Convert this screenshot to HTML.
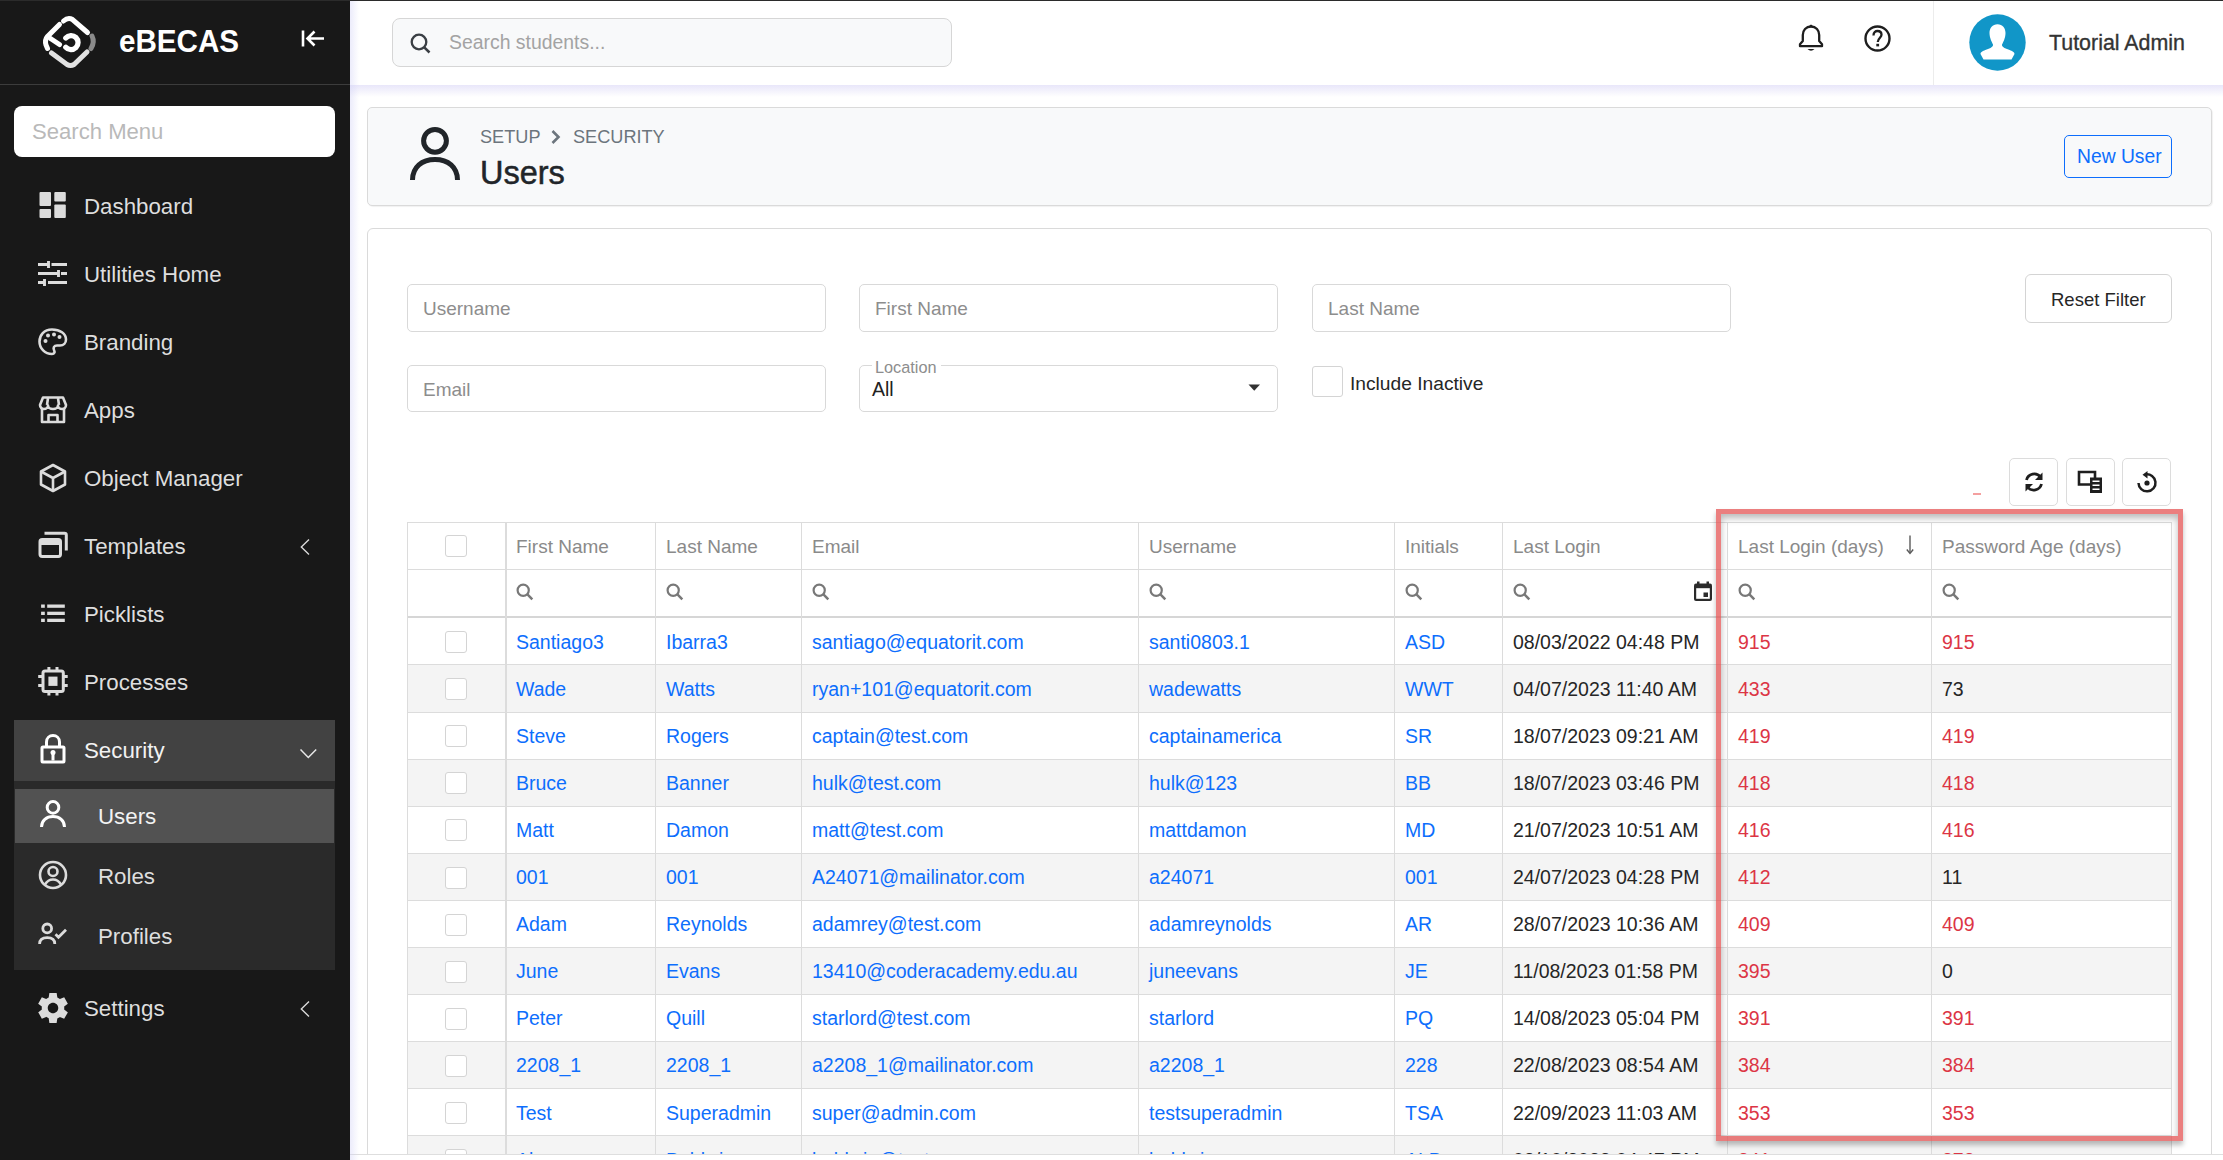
<!DOCTYPE html>
<html><head><meta charset="utf-8">
<style>
*{box-sizing:border-box;margin:0;padding:0}
html,body{width:2223px;height:1160px;overflow:hidden;background:#fff;font-family:"Liberation Sans",sans-serif}
.a{position:absolute}
.t{position:absolute;white-space:nowrap;line-height:1}
#sb{position:absolute;left:0;top:0;width:350px;height:1160px;background:#181818;z-index:5}
.mi{position:absolute;left:84px;margin-top:1px;font-size:22.3px;color:#dedede;line-height:1;white-space:nowrap}
.ic{position:absolute;left:38px;width:30px;height:30px}
.chev{position:absolute}
.inp{position:absolute;background:#fff;border:1px solid #d9d9d9;border-radius:5px}
.ph{position:absolute;white-space:nowrap;line-height:1;font-size:19px;color:#8d8d8d}
.vl{position:absolute;width:1px;background:#dcdcdc}
.hl{position:absolute;height:1px;background:#dcdcdc}
.cell{position:absolute;white-space:nowrap;line-height:1;font-size:19.5px}
.lnk{color:#0d6efd}
.red{color:#dc3545}
.blk{color:#262626}
.hd{color:#8a8a8a;font-size:19px}
.cb{position:absolute;width:22px;height:22px;border:1px solid #d4d4d4;border-radius:3px;background:#fff}
.tb{position:absolute;width:49px;height:48px;border:1px solid #dcdcdc;border-radius:5px;background:#fff}
</style></head><body>
<div class="a" style="left:0;top:0;width:2223px;height:1px;background:#2b2b2b;z-index:50"></div>
<!-- SIDEBAR -->
<div id="sb">
  <svg class="a" style="left:40px;top:12px" width="60" height="60" viewBox="40 12 60 60">
    <g fill="none" stroke-linecap="round" stroke-width="5">
      <path d="M63.5 21 Q68 17 72.5 19.5 L87.5 32.5" stroke="#fff"/>
      <path d="M59.5 24.5 L47.5 36.5 Q44.5 40 46 45 L47.5 48.5" stroke="#fff"/>
      <path d="M50.5 38.5 L59.5 44.5" stroke="#fff"/>
      <path d="M65.8 38 A7 7 0 1 1 65.8 47.2" stroke="#fff" stroke-width="5.3"/>
      <path d="M51.5 53 L67 64.5 Q70.5 66.5 74 64.5 L87 52" stroke="#e2e2e2"/>
      <path d="M92 36 Q95 42 91 48.5" stroke="#8a8a8a"/>
    </g>
  </svg>
  <div class="t" style="left:119px;top:25.5px;font-size:31.5px;font-weight:bold;color:#fff;transform:scaleX(0.94);transform-origin:0 0">eBECAS</div>
  <svg class="a" style="left:300px;top:28px" width="26" height="22" viewBox="0 0 26 22">
    <path d="M3 2.5 V18.5" stroke="#fff" stroke-width="2.6" fill="none"/>
    <path d="M24 10.5 H8 M14.5 3.5 L7.5 10.5 L14.5 17.5" stroke="#fff" stroke-width="2.6" fill="none"/>
  </svg>
  <div class="a" style="left:0;top:84px;width:350px;height:1px;background:#3c3c3c"></div>

  <div class="a" style="left:14px;top:106px;width:321px;height:51px;background:#fff;border-radius:8px"></div>
  <div class="t" style="left:32px;top:121px;font-size:22.1px;color:#b9b9b9">Search Menu</div>

  <!-- menu items -->
  <svg class="ic" style="top:191px" viewBox="0 0 30 30"><g fill="#dcdcdc"><rect x="1.5" y="1" width="11.5" height="14" rx="1"/><rect x="1.5" y="18" width="11.5" height="9" rx="1"/><rect x="16.3" y="1" width="11.5" height="9.5" rx="1"/><rect x="16.3" y="13.5" width="11.5" height="13.5" rx="1"/></g></svg>
  <div class="mi" style="top:195px">Dashboard</div>

  <svg class="ic" style="top:260.5px" viewBox="0 0 30 30"><g stroke="#dcdcdc" stroke-width="2.9" fill="none"><path d="M0 3.5 H10 M13.5 3.5 H29 M10.5 0 V7"/><path d="M0 12.5 H20 M23 12.5 H29 M20.5 9 V16"/><path d="M0 21.5 H6 M10 21.5 H29 M6.5 18 V25"/></g></svg>
  <div class="mi" style="top:263px">Utilities Home</div>

  <svg class="ic" style="top:327px" viewBox="0 0 30 30"><g stroke="#dcdcdc" stroke-width="2.6" fill="none"><path d="M14 2.5 C6 2.5 1.5 8 1.5 14.5 C1.5 21.5 7 27 14 27 C16.5 27 17 25 16 23 C15 20.5 16 18.5 19 18.5 H22 C25.5 18.5 28 16 28 12.5 C28 6.5 22 2.5 14 2.5 Z"/></g><g fill="#dcdcdc"><circle cx="7.5" cy="14" r="2"/><circle cx="10" cy="8.5" r="2"/><circle cx="16" cy="7.5" r="2"/><circle cx="21.5" cy="10" r="2"/></g></svg>
  <div class="mi" style="top:331px">Branding</div>

  <svg class="ic" style="top:395px" viewBox="0 0 30 30"><g stroke="#dcdcdc" stroke-width="2.6" fill="none" stroke-linejoin="round"><path d="M5 2.5 H25 L28 10 C28 12.5 26 14 24 14 C22 14 20 12.5 20 10.5 C20 12.5 18 14 15 14 C12 14 10 12.5 10 10.5 C10 12.5 8 14 6 14 C4 14 2 12.5 2 10 Z"/><path d="M4 13.5 V27 H26 V13.5"/><path d="M10.5 27 V20 H19.5 V27"/><path d="M10 3 L9 10 M20 3 L21 10"/></g></svg>
  <div class="mi" style="top:399px">Apps</div>

  <svg class="ic" style="top:463px" viewBox="0 0 30 30"><g stroke="#dcdcdc" stroke-width="2.6" fill="none" stroke-linejoin="round"><path d="M15 2 L27 8.5 V21.5 L15 28 L3 21.5 V8.5 Z"/><path d="M3 8.5 L15 15 L27 8.5 M15 15 V28"/></g></svg>
  <div class="mi" style="top:467px">Object Manager</div>

  <svg class="ic" style="top:531px" viewBox="0 0 30 30"><g stroke="#dcdcdc" stroke-width="3" fill="none" stroke-linejoin="round"><rect x="2" y="8.5" width="20.5" height="17" rx="2.2"/><path d="M6.5 2.3 H26.5 Q28.3 2.3 28.3 4.1 V19.5"/></g><rect x="2" y="8.5" width="20.5" height="5.5" fill="#dcdcdc"/></svg>
  <div class="mi" style="top:535px">Templates</div>
  <svg class="chev" style="left:298px;top:537px" width="14" height="20" viewBox="0 0 14 20"><path d="M11 2.5 L3.3 10 L11 17.5" stroke="#dcdcdc" stroke-width="1.35" fill="none"/></svg>

  <svg class="ic" style="top:599px" viewBox="0 0 30 30"><g fill="#dcdcdc"><rect x="3.1" y="5.5" width="3.7" height="3.3"/><rect x="3.1" y="12.7" width="3.7" height="3.3"/><rect x="3.1" y="19.7" width="3.7" height="3.3"/><rect x="9.2" y="5.5" width="17.6" height="3.3"/><rect x="9.2" y="12.7" width="17.6" height="3.3"/><rect x="9.2" y="19.7" width="17.6" height="3.3"/></g></svg>
  <div class="mi" style="top:603px">Picklists</div>

  <svg class="ic" style="top:667px" viewBox="0 0 30 30"><g stroke="#dcdcdc" stroke-width="3" fill="none"><rect x="5" y="4" width="20.3" height="20.5" rx="2"/><path d="M10.9 0 V4 M19 0 V4 M10.9 24.5 V28.5 M19 24.5 V28.5 M0.2 9.6 H5 M0.2 18.6 H5 M25.3 9.6 H29.7 M25.3 18.6 H29.7"/></g><rect x="10.4" y="9.6" width="9.1" height="9.3" fill="#dcdcdc"/></svg>
  <div class="mi" style="top:671px">Processes</div>

  <!-- security group -->
  <div class="a" style="left:14px;top:720px;width:321px;height:61px;background:#424242"></div>
  <div class="a" style="left:14px;top:781px;width:321px;height:189px;background:#2a2a2a"></div>
  <div class="a" style="left:15px;top:789px;width:319px;height:54px;background:#525252"></div>
  <svg class="ic" style="top:734px" viewBox="0 0 30 30"><g stroke="#fff" stroke-width="3" fill="none" stroke-linejoin="round"><path d="M8.5 13 V8 C8.5 4 11.5 1.5 15 1.5 C18.5 1.5 21.5 4 21.5 8 V13"/><rect x="4" y="13" width="22" height="15" rx="1"/></g><circle cx="15" cy="18.5" r="2.5" fill="#fff"/><rect x="13.5" y="18.5" width="3" height="8" fill="#fff"/></svg>
  <div class="mi" style="top:739px;color:#f2f2f2">Security</div>
  <svg class="chev" style="left:297px;top:745px" width="22" height="16" viewBox="0 0 22 16"><path d="M3.5 4.5 L11.3 12.5 L19.2 4.5" stroke="#e8e8e8" stroke-width="1.5" fill="none"/></svg>

  <svg class="ic" style="top:799px" viewBox="0 0 30 30"><g stroke="#fff" stroke-width="3" fill="none"><circle cx="15" cy="8.4" r="5.8"/><path d="M3.5 28 C3.5 21.5 8.5 17.5 15 17.5 C21.5 17.5 26.5 21.5 26.5 28"/></g></svg>
  <div class="mi" style="left:98px;top:805px;color:#f2f2f2">Users</div>

  <svg class="ic" style="top:860px" viewBox="0 0 30 30"><g stroke="#dcdcdc" stroke-width="2.6" fill="none"><circle cx="15" cy="15" r="13"/><circle cx="15" cy="11.5" r="4.5"/><path d="M7 24.5 C9 21 12 19.5 15 19.5 C18 19.5 21 21 23 24.5"/></g></svg>
  <div class="mi" style="left:98px;top:865px">Roles</div>

  <svg class="ic" style="top:921px" viewBox="0 0 30 30"><g stroke="#dcdcdc" stroke-width="2.8" fill="none"><circle cx="9.2" cy="7.4" r="4.4"/><path d="M1.6 23 C1.6 18.5 5 16.6 9.2 16.6 C13.4 16.6 16.8 18.5 16.8 23"/><path d="M17.5 13.2 L20.5 16.2 L28 8.7"/></g></svg>
  <div class="mi" style="left:98px;top:925px">Profiles</div>

  <svg class="a" style="left:35px;top:989.5px" width="36" height="36" viewBox="0 0 24 24"><path fill="#dcdcdc" d="M19.44 12.99l-.01.02c.04-.33.08-.67.08-1.01 0-.34-.03-.66-.07-.99l.01.02 2.44-1.92-2.43-4.22-2.87 1.16.01.01c-.52-.4-1.09-.74-1.71-.99h.01L14.44 2H9.57l-.44 3.07h.01c-.62.25-1.190.59-1.71.99l.01-.01-2.88-1.17-2.44 4.22 2.440 1.92.01-.02c-.04.33-.07.65-.07.99 0 .34.03.68.08 1.01l-.01-.02-2.1 1.65-.33.26 2.43 4.2 2.88-1.15-.02-.04c.53.41 1.1.75 1.73 1h-.03L9.58 22h4.85s.03-.18.06-.42l.38-2.65h-.01c.62-.25 1.2-.59 1.73-1l-.02.04 2.88 1.15 2.43-4.2s-.14-.12-.33-.26l-2.11-1.67zM12 15.5c-1.93 0-3.5-1.57-3.5-3.5s1.57-3.5 3.5-3.5 3.5 1.57 3.5 3.5-1.570 3.5-3.5 3.5z"/></svg>
  <div class="mi" style="top:997px">Settings</div>
  <svg class="chev" style="left:298px;top:999px" width="14" height="20" viewBox="0 0 14 20"><path d="M11 2.5 L3.3 10 L11 17.5" stroke="#dcdcdc" stroke-width="1.35" fill="none"/></svg>
</div>

<!-- MAIN -->
<div class="a" style="left:350px;top:0;width:9px;height:1160px;background:linear-gradient(to right,rgba(205,205,245,.38),rgba(255,255,255,0));z-index:4"></div>
<div class="a" style="left:350px;top:85px;width:1873px;height:12px;background:linear-gradient(to bottom,rgba(214,210,245,.55),rgba(255,255,255,0));z-index:3"></div>
<div class="a" style="left:392px;top:18px;width:560px;height:49px;background:#f8f9fa;border:1px solid #d6d6d6;border-radius:8px"></div>
<svg class="a" style="left:409px;top:32px" width="24" height="24" viewBox="0 0 24 24"><circle cx="10" cy="10" r="7.3" stroke="#3a3f44" stroke-width="2.3" fill="none"/><path d="M15.3 15.3 L20.5 20.5" stroke="#3a3f44" stroke-width="2.5"/></svg>
<div class="t" style="left:449px;top:33px;font-size:19.4px;color:#a3a3a3">Search students...</div>
<svg class="a" style="left:1797px;top:24px" width="28" height="30" viewBox="0 0 28 30"><path d="M14 2.5 C9 2.5 5.8 6.5 5.8 11 V17 L3 20.2 V22.2 H25 V20.2 L22.2 17 V11 C22.2 6.5 19 2.5 14 2.5 Z" stroke="#1e1e1e" stroke-width="2.3" fill="none" stroke-linejoin="round"/><path d="M10.5 25 Q14 28.5 17.5 25 Z" fill="#1e1e1e"/><rect x="12.6" y="0.8" width="2.8" height="2.5" rx="1" fill="#1e1e1e"/></svg>
<svg class="a" style="left:1863px;top:24px" width="29" height="29" viewBox="0 0 29 29"><circle cx="14.5" cy="14.5" r="12" stroke="#1e1e1e" stroke-width="2.4" fill="none"/><path d="M10.5 11.5 C10.5 8.5 12.5 7 14.5 7 C16.8 7 18.5 8.5 18.5 10.8 C18.5 13.5 15 14.2 14.8 18" stroke="#1e1e1e" stroke-width="2.3" fill="none"/><rect x="13.3" y="19.8" width="2.8" height="2.6" fill="#1e1e1e"/></svg>
<div class="a" style="left:1933px;top:1px;width:1px;height:84px;background:#ececec"></div>
<svg class="a" style="left:1969px;top:14px" width="57" height="57" viewBox="0 0 57 57"><circle cx="28.5" cy="28.5" r="28.2" fill="#1196c8"/><path d="M28.5 10.3 C23.5 10.3 20.5 14 20.5 19 C20.5 24 23 28.5 24 30.5 C24.3 32 23 33.5 19 35 C13 37 11.5 38.5 11.5 40 L14.5 45.5 H42.5 L45.5 40 C45.5 38.5 44 37 38 35 C34 33.5 32.7 32 33 30.5 C34 28.5 36.5 24 36.5 19 C36.5 14 33.5 10.3 28.5 10.3 Z" fill="#fff"/></svg>
<div class="t" style="left:2049px;top:32.5px;font-size:21.4px;color:#333;-webkit-text-stroke:0.35px #333">Tutorial Admin</div>
<div class="a" style="left:367px;top:107px;width:1845px;height:99px;background:#f8f9fa;border:1px solid #dadada;border-radius:5px;box-shadow:1px 1px 1px rgba(0,0,0,.06)"></div>
<svg class="a" style="left:407px;top:124px" width="56" height="60" viewBox="0 0 56 60"><circle cx="28" cy="16.8" r="11.4" stroke="#212529" stroke-width="5" fill="none"/><path d="M5.5 56 C5.5 43 15 35.5 28 35.5 C41 35.5 50.5 43 50.5 56" stroke="#212529" stroke-width="5" fill="none"/></svg>
<div class="t" style="left:480px;top:128px;font-size:18.15px;color:#6c757d">SETUP</div>
<svg class="a" style="left:549px;top:129px" width="14" height="16" viewBox="0 0 14 16"><path d="M3.5 2 L9.5 8 L3.5 14" stroke="#6c757d" stroke-width="2.6" fill="none"/></svg>
<div class="t" style="left:573px;top:128px;font-size:18.15px;color:#6c757d">SECURITY</div>
<div class="t" style="left:480px;top:157px;font-size:32.5px;color:#212529;-webkit-text-stroke:0.5px #212529">Users</div>
<div class="a" style="left:2064px;top:135px;width:108px;height:43px;border:1px solid #0d6efd;border-radius:5px"></div>
<div class="t" style="left:2077px;top:147px;font-size:19.3px;color:#0d6efd">New User</div>
<div class="a" style="left:367px;top:228px;width:1845px;height:1000px;background:#fff;border:1px solid #dadada;border-radius:6px"></div>
<div class="inp" style="left:407px;top:284px;width:419px;height:48px"></div>
<div class="ph" style="left:423px;top:299px">Username</div>
<div class="inp" style="left:859px;top:284px;width:419px;height:48px"></div>
<div class="ph" style="left:875px;top:299px">First Name</div>
<div class="inp" style="left:1312px;top:284px;width:419px;height:48px"></div>
<div class="ph" style="left:1328px;top:299px">Last Name</div>
<div class="inp" style="left:407px;top:365px;width:419px;height:47px"></div>
<div class="ph" style="left:423px;top:380px">Email</div>
<div class="inp" style="left:859px;top:365px;width:419px;height:47px"></div>
<div class="a" style="left:872px;top:360px;width:69px;height:8px;background:#fff"></div>
<div class="t" style="left:875px;top:359px;font-size:16.3px;color:#8d8d8d">Location</div>
<div class="t" style="left:872px;top:380px;font-size:19.5px;color:#222">All</div>
<svg class="a" style="left:1248px;top:384px" width="13" height="7" viewBox="0 0 13 7"><path d="M0.5 0.5 H12 L6.25 6.8 Z" fill="#333"/></svg>
<div class="a" style="left:1312px;top:366px;width:31px;height:31px;border:1px solid #d4d4d4;border-radius:3px"></div>
<div class="t" style="left:1350px;top:374px;font-size:19.2px;color:#262626">Include Inactive</div>
<div class="a" style="left:2025px;top:274px;width:147px;height:49px;border:1px solid #d4d4d4;border-radius:6px"></div>
<div class="t" style="left:2051px;top:291px;font-size:18.5px;color:#262626">Reset Filter</div>
<div class="tb" style="left:2009px;top:458px"></div>
<div class="tb" style="left:2066px;top:458px"></div>
<div class="tb" style="left:2122px;top:458px"></div>
<svg class="a" style="left:2021px;top:469px" width="26" height="26" viewBox="0 0 26 26"><path d="M5.5 11 A8 8 0 0 1 19.5 8" stroke="#1e1e1e" stroke-width="2.8" fill="none"/><path d="M21.5 3.5 V11 H14 Z" fill="#1e1e1e"/><path d="M20.5 15 A8 8 0 0 1 6.5 18" stroke="#1e1e1e" stroke-width="2.8" fill="none"/><path d="M4.5 22.5 V15 H12 Z" fill="#1e1e1e"/></svg>
<svg class="a" style="left:2077px;top:470px" width="28" height="26" viewBox="0 0 28 26"><path d="M2 2 H18 V14.5 H2 Z" stroke="#1e1e1e" stroke-width="2.6" fill="none"/><rect x="13" y="7.5" width="12" height="15.5" fill="#1e1e1e"/><rect x="15.5" y="10.5" width="7" height="1.5" fill="#fff"/><rect x="15.5" y="14.5" width="7" height="1.5" fill="#fff"/><rect x="15.5" y="18.5" width="7" height="1.5" fill="#fff"/></svg>
<svg class="a" style="left:2134px;top:470px" width="26" height="26" viewBox="0 0 26 26"><path d="M11.5 4.5 A8.5 8.5 0 1 1 4.5 13" stroke="#1e1e1e" stroke-width="2.5" fill="none"/><path d="M13.5 1 V8.5 L8.5 4.8 Z" fill="#1e1e1e"/><circle cx="13" cy="13" r="2.6" fill="#1e1e1e"/></svg>
<div class="a" style="left:1973px;top:493px;width:8px;height:2px;background:#f4a0a0"></div>
<div class="a" style="left:0;top:0;width:2223px;height:1154px;overflow:hidden">
<div class="a" style="left:407px;top:665.10px;width:1764px;height:47.10px;background:#f4f4f4"></div>
<div class="a" style="left:407px;top:759.30px;width:1764px;height:47.10px;background:#f4f4f4"></div>
<div class="a" style="left:407px;top:853.50px;width:1764px;height:47.10px;background:#f4f4f4"></div>
<div class="a" style="left:407px;top:947.70px;width:1764px;height:47.10px;background:#f4f4f4"></div>
<div class="a" style="left:407px;top:1041.90px;width:1764px;height:47.10px;background:#f4f4f4"></div>
<div class="a" style="left:407px;top:1136.10px;width:1764px;height:47.10px;background:#f4f4f4"></div>
<div class="hl" style="left:407px;top:522px;width:1764px"></div>
<div class="hl" style="left:407px;top:569.0px;width:1764px"></div>
<div class="hl" style="left:407px;top:616px;width:1764px;height:2px;background:#d6d6d6"></div>
<div class="hl" style="left:407px;top:664.40px;width:1764px"></div>
<div class="hl" style="left:407px;top:711.50px;width:1764px"></div>
<div class="hl" style="left:407px;top:758.60px;width:1764px"></div>
<div class="hl" style="left:407px;top:805.70px;width:1764px"></div>
<div class="hl" style="left:407px;top:852.80px;width:1764px"></div>
<div class="hl" style="left:407px;top:899.90px;width:1764px"></div>
<div class="hl" style="left:407px;top:947.00px;width:1764px"></div>
<div class="hl" style="left:407px;top:994.10px;width:1764px"></div>
<div class="hl" style="left:407px;top:1041.20px;width:1764px"></div>
<div class="hl" style="left:407px;top:1088.30px;width:1764px"></div>
<div class="hl" style="left:407px;top:1135.40px;width:1764px"></div>
<div class="hl" style="left:407px;top:1182.50px;width:1764px"></div>
<div class="vl" style="left:407px;top:522px;width:1px;height:632px"></div>
<div class="vl" style="left:505px;top:522px;width:2px;height:632px"></div>
<div class="vl" style="left:655px;top:522px;width:1px;height:632px"></div>
<div class="vl" style="left:801px;top:522px;width:1px;height:632px"></div>
<div class="vl" style="left:1138px;top:522px;width:1px;height:632px"></div>
<div class="vl" style="left:1394px;top:522px;width:1px;height:632px"></div>
<div class="vl" style="left:1502px;top:522px;width:1px;height:632px"></div>
<div class="vl" style="left:1727px;top:522px;width:1px;height:632px"></div>
<div class="vl" style="left:1931px;top:522px;width:1px;height:632px"></div>
<div class="vl" style="left:2171px;top:522px;width:1px;height:632px"></div>
<div class="cell hd" style="left:516px;top:537px">First Name</div>
<div class="cell hd" style="left:666px;top:537px">Last Name</div>
<div class="cell hd" style="left:812px;top:537px">Email</div>
<div class="cell hd" style="left:1149px;top:537px">Username</div>
<div class="cell hd" style="left:1405px;top:537px">Initials</div>
<div class="cell hd" style="left:1513px;top:537px">Last Login</div>
<div class="cell hd" style="left:1738px;top:537px">Last Login (days)</div>
<div class="cell hd" style="left:1942px;top:537px">Password Age (days)</div>
<div class="cb" style="left:445px;top:535px"></div>
<svg class="a" style="left:1904px;top:534px" width="12" height="22" viewBox="0 0 12 22"><path d="M6 1.5 V19" stroke="#5a5a5a" stroke-width="1.4"/><path d="M2.8 15.5 L6 19.5 L9.2 15.5" stroke="#5a5a5a" stroke-width="1.4" fill="none"/></svg>
<svg class="a" style="left:516px;top:583px" width="18" height="18" viewBox="0 0 18 18"><circle cx="7.2" cy="7.2" r="5.6" stroke="#787878" stroke-width="2.2" fill="none"/><path d="M11.2 11.2 L16.3 16.3" stroke="#787878" stroke-width="2.5"/></svg>
<svg class="a" style="left:666px;top:583px" width="18" height="18" viewBox="0 0 18 18"><circle cx="7.2" cy="7.2" r="5.6" stroke="#787878" stroke-width="2.2" fill="none"/><path d="M11.2 11.2 L16.3 16.3" stroke="#787878" stroke-width="2.5"/></svg>
<svg class="a" style="left:812px;top:583px" width="18" height="18" viewBox="0 0 18 18"><circle cx="7.2" cy="7.2" r="5.6" stroke="#787878" stroke-width="2.2" fill="none"/><path d="M11.2 11.2 L16.3 16.3" stroke="#787878" stroke-width="2.5"/></svg>
<svg class="a" style="left:1149px;top:583px" width="18" height="18" viewBox="0 0 18 18"><circle cx="7.2" cy="7.2" r="5.6" stroke="#787878" stroke-width="2.2" fill="none"/><path d="M11.2 11.2 L16.3 16.3" stroke="#787878" stroke-width="2.5"/></svg>
<svg class="a" style="left:1405px;top:583px" width="18" height="18" viewBox="0 0 18 18"><circle cx="7.2" cy="7.2" r="5.6" stroke="#787878" stroke-width="2.2" fill="none"/><path d="M11.2 11.2 L16.3 16.3" stroke="#787878" stroke-width="2.5"/></svg>
<svg class="a" style="left:1513px;top:583px" width="18" height="18" viewBox="0 0 18 18"><circle cx="7.2" cy="7.2" r="5.6" stroke="#787878" stroke-width="2.2" fill="none"/><path d="M11.2 11.2 L16.3 16.3" stroke="#787878" stroke-width="2.5"/></svg>
<svg class="a" style="left:1738px;top:583px" width="18" height="18" viewBox="0 0 18 18"><circle cx="7.2" cy="7.2" r="5.6" stroke="#787878" stroke-width="2.2" fill="none"/><path d="M11.2 11.2 L16.3 16.3" stroke="#787878" stroke-width="2.5"/></svg>
<svg class="a" style="left:1942px;top:583px" width="18" height="18" viewBox="0 0 18 18"><circle cx="7.2" cy="7.2" r="5.6" stroke="#787878" stroke-width="2.2" fill="none"/><path d="M11.2 11.2 L16.3 16.3" stroke="#787878" stroke-width="2.5"/></svg>
<svg class="a" style="left:1693px;top:581px" width="20" height="21" viewBox="0 0 20 21"><rect x="1" y="2.5" width="18" height="17.5" rx="2" fill="#2b2b2b"/><rect x="3.2" y="7.2" width="13.6" height="10.6" fill="#fff"/><rect x="10.5" y="11.5" width="4.5" height="4.5" fill="#2b2b2b"/><rect x="4" y="0.5" width="2.5" height="3" fill="#2b2b2b"/><rect x="13.5" y="0.5" width="2.5" height="3" fill="#2b2b2b"/></svg>
<div class="cb" style="left:445px;top:631.00px"></div>
<div class="cell lnk" style="left:516px;top:632.50px">Santiago3</div>
<div class="cell lnk" style="left:666px;top:632.50px">Ibarra3</div>
<div class="cell lnk" style="left:812px;top:632.50px">santiago@equatorit.com</div>
<div class="cell lnk" style="left:1149px;top:632.50px">santi0803.1</div>
<div class="cell lnk" style="left:1405px;top:632.50px">ASD</div>
<div class="cell blk" style="left:1513px;top:632.50px">08/03/2022 04:48 PM</div>
<div class="cell red" style="left:1738px;top:632.50px">915</div>
<div class="cell red" style="left:1942px;top:632.50px">915</div>
<div class="cb" style="left:445px;top:678.10px"></div>
<div class="cell lnk" style="left:516px;top:679.60px">Wade</div>
<div class="cell lnk" style="left:666px;top:679.60px">Watts</div>
<div class="cell lnk" style="left:812px;top:679.60px">ryan+101@equatorit.com</div>
<div class="cell lnk" style="left:1149px;top:679.60px">wadewatts</div>
<div class="cell lnk" style="left:1405px;top:679.60px">WWT</div>
<div class="cell blk" style="left:1513px;top:679.60px">04/07/2023 11:40 AM</div>
<div class="cell red" style="left:1738px;top:679.60px">433</div>
<div class="cell blk" style="left:1942px;top:679.60px">73</div>
<div class="cb" style="left:445px;top:725.20px"></div>
<div class="cell lnk" style="left:516px;top:726.70px">Steve</div>
<div class="cell lnk" style="left:666px;top:726.70px">Rogers</div>
<div class="cell lnk" style="left:812px;top:726.70px">captain@test.com</div>
<div class="cell lnk" style="left:1149px;top:726.70px">captainamerica</div>
<div class="cell lnk" style="left:1405px;top:726.70px">SR</div>
<div class="cell blk" style="left:1513px;top:726.70px">18/07/2023 09:21 AM</div>
<div class="cell red" style="left:1738px;top:726.70px">419</div>
<div class="cell red" style="left:1942px;top:726.70px">419</div>
<div class="cb" style="left:445px;top:772.30px"></div>
<div class="cell lnk" style="left:516px;top:773.80px">Bruce</div>
<div class="cell lnk" style="left:666px;top:773.80px">Banner</div>
<div class="cell lnk" style="left:812px;top:773.80px">hulk@test.com</div>
<div class="cell lnk" style="left:1149px;top:773.80px">hulk@123</div>
<div class="cell lnk" style="left:1405px;top:773.80px">BB</div>
<div class="cell blk" style="left:1513px;top:773.80px">18/07/2023 03:46 PM</div>
<div class="cell red" style="left:1738px;top:773.80px">418</div>
<div class="cell red" style="left:1942px;top:773.80px">418</div>
<div class="cb" style="left:445px;top:819.40px"></div>
<div class="cell lnk" style="left:516px;top:820.90px">Matt</div>
<div class="cell lnk" style="left:666px;top:820.90px">Damon</div>
<div class="cell lnk" style="left:812px;top:820.90px">matt@test.com</div>
<div class="cell lnk" style="left:1149px;top:820.90px">mattdamon</div>
<div class="cell lnk" style="left:1405px;top:820.90px">MD</div>
<div class="cell blk" style="left:1513px;top:820.90px">21/07/2023 10:51 AM</div>
<div class="cell red" style="left:1738px;top:820.90px">416</div>
<div class="cell red" style="left:1942px;top:820.90px">416</div>
<div class="cb" style="left:445px;top:866.50px"></div>
<div class="cell lnk" style="left:516px;top:868.00px">001</div>
<div class="cell lnk" style="left:666px;top:868.00px">001</div>
<div class="cell lnk" style="left:812px;top:868.00px">A24071@mailinator.com</div>
<div class="cell lnk" style="left:1149px;top:868.00px">a24071</div>
<div class="cell lnk" style="left:1405px;top:868.00px">001</div>
<div class="cell blk" style="left:1513px;top:868.00px">24/07/2023 04:28 PM</div>
<div class="cell red" style="left:1738px;top:868.00px">412</div>
<div class="cell blk" style="left:1942px;top:868.00px">11</div>
<div class="cb" style="left:445px;top:913.60px"></div>
<div class="cell lnk" style="left:516px;top:915.10px">Adam</div>
<div class="cell lnk" style="left:666px;top:915.10px">Reynolds</div>
<div class="cell lnk" style="left:812px;top:915.10px">adamrey@test.com</div>
<div class="cell lnk" style="left:1149px;top:915.10px">adamreynolds</div>
<div class="cell lnk" style="left:1405px;top:915.10px">AR</div>
<div class="cell blk" style="left:1513px;top:915.10px">28/07/2023 10:36 AM</div>
<div class="cell red" style="left:1738px;top:915.10px">409</div>
<div class="cell red" style="left:1942px;top:915.10px">409</div>
<div class="cb" style="left:445px;top:960.70px"></div>
<div class="cell lnk" style="left:516px;top:962.20px">June</div>
<div class="cell lnk" style="left:666px;top:962.20px">Evans</div>
<div class="cell lnk" style="left:812px;top:962.20px">13410@coderacademy.edu.au</div>
<div class="cell lnk" style="left:1149px;top:962.20px">juneevans</div>
<div class="cell lnk" style="left:1405px;top:962.20px">JE</div>
<div class="cell blk" style="left:1513px;top:962.20px">11/08/2023 01:58 PM</div>
<div class="cell red" style="left:1738px;top:962.20px">395</div>
<div class="cell blk" style="left:1942px;top:962.20px">0</div>
<div class="cb" style="left:445px;top:1007.80px"></div>
<div class="cell lnk" style="left:516px;top:1009.30px">Peter</div>
<div class="cell lnk" style="left:666px;top:1009.30px">Quill</div>
<div class="cell lnk" style="left:812px;top:1009.30px">starlord@test.com</div>
<div class="cell lnk" style="left:1149px;top:1009.30px">starlord</div>
<div class="cell lnk" style="left:1405px;top:1009.30px">PQ</div>
<div class="cell blk" style="left:1513px;top:1009.30px">14/08/2023 05:04 PM</div>
<div class="cell red" style="left:1738px;top:1009.30px">391</div>
<div class="cell red" style="left:1942px;top:1009.30px">391</div>
<div class="cb" style="left:445px;top:1054.90px"></div>
<div class="cell lnk" style="left:516px;top:1056.40px">2208_1</div>
<div class="cell lnk" style="left:666px;top:1056.40px">2208_1</div>
<div class="cell lnk" style="left:812px;top:1056.40px">a2208_1@mailinator.com</div>
<div class="cell lnk" style="left:1149px;top:1056.40px">a2208_1</div>
<div class="cell lnk" style="left:1405px;top:1056.40px">228</div>
<div class="cell blk" style="left:1513px;top:1056.40px">22/08/2023 08:54 AM</div>
<div class="cell red" style="left:1738px;top:1056.40px">384</div>
<div class="cell red" style="left:1942px;top:1056.40px">384</div>
<div class="cb" style="left:445px;top:1102.00px"></div>
<div class="cell lnk" style="left:516px;top:1103.50px">Test</div>
<div class="cell lnk" style="left:666px;top:1103.50px">Superadmin</div>
<div class="cell lnk" style="left:812px;top:1103.50px">super@admin.com</div>
<div class="cell lnk" style="left:1149px;top:1103.50px">testsuperadmin</div>
<div class="cell lnk" style="left:1405px;top:1103.50px">TSA</div>
<div class="cell blk" style="left:1513px;top:1103.50px">22/09/2023 11:03 AM</div>
<div class="cell red" style="left:1738px;top:1103.50px">353</div>
<div class="cell red" style="left:1942px;top:1103.50px">353</div>
<div class="cb" style="left:445px;top:1149.10px"></div>
<div class="cell lnk" style="left:516px;top:1150.60px">Alec</div>
<div class="cell lnk" style="left:666px;top:1150.60px">Baldwin</div>
<div class="cell lnk" style="left:812px;top:1150.60px">baldwin@test.com</div>
<div class="cell lnk" style="left:1149px;top:1150.60px">baldwin</div>
<div class="cell lnk" style="left:1405px;top:1150.60px">ALB</div>
<div class="cell blk" style="left:1513px;top:1150.60px">02/10/2023 04:47 PM</div>
<div class="cell red" style="left:1738px;top:1150.60px">341</div>
<div class="cell red" style="left:1942px;top:1150.60px">373</div>
</div>
<div class="a" style="left:350px;top:1154px;width:1873px;height:1px;background:#dedede"></div>
<div class="a" style="left:350px;top:1155px;width:1873px;height:5px;background:#fff"></div>
<div class="a" style="left:1716px;top:509px;width:467px;height:632px;border:5px solid rgba(226,72,72,.7);box-shadow:0 4px 5px rgba(0,0,0,.26), inset 0 4px 7px rgba(0,0,0,.28);z-index:6"></div>
</body></html>
